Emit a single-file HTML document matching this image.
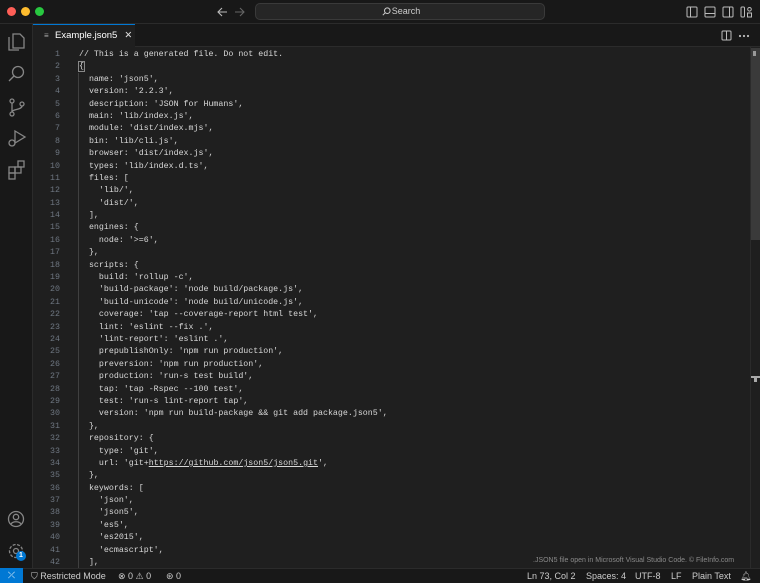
<!DOCTYPE html>
<html><head><meta charset="utf-8"><style>
*{margin:0;padding:0;box-sizing:border-box}
body{width:760px;height:583px;background:#1f1f1f;overflow:hidden;font-family:"Liberation Sans",sans-serif;position:relative;color:#ccc}
.title{position:absolute;left:0;top:0;width:760px;height:24px;background:#181818;border-bottom:1px solid #2b2b2b}
.dot{position:absolute;top:7px;width:9px;height:9px;border-radius:50%}
.search{position:absolute;left:255px;top:3px;width:290px;height:17px;background:#262626;border:1px solid #3a3a3a;border-radius:5px;font-size:9px;color:#ccc;text-align:center;line-height:15px}
.act{position:absolute;left:0;top:24px;width:33px;height:544px;background:#181818;border-right:1px solid #2b2b2b}
.tabs{position:absolute;left:33px;top:24px;width:727px;height:23px;background:#181818;border-bottom:1px solid #2b2b2b}
.tab{position:absolute;left:0;top:0;width:102px;height:23px;background:#1f1f1f;border-top:1px solid #0078d4;font-size:9.5px;color:#fff;line-height:22px;padding-left:22px}
.code{position:absolute;left:33px;top:48px;width:717px;height:521px;font-family:"Liberation Mono",monospace;font-size:8.3px;white-space:pre;line-height:12.39px;padding-top:1px}
.ln{position:absolute;left:0;color:#6e7681}
.tx{position:absolute;left:79px;color:#d8d8d8}
.guide{position:absolute;left:78px;top:73px;width:1px;height:495px;background:#404040}
.status{position:absolute;left:0;top:568px;width:760px;height:15px;background:#181818;border-top:1px solid #2b2b2b;font-size:9px;color:#ccc;line-height:14px}
.status span{position:absolute;top:0}
svg{position:absolute}
</style></head><body>
<div class="title">
<div class="dot" style="left:7px;background:#ff5f57"></div>
<div class="dot" style="left:21px;background:#febc2e"></div>
<div class="dot" style="left:35px;background:#28c840"></div>
<svg style="left:216px;top:6px" width="30" height="12" viewBox="0 0 30 12" fill="none" stroke="#bbb" stroke-width="1.1"><path d="M2 6h9M6 2L2 6l4 4"/><path d="M19 6h9M24 2l4 4-4 4" stroke="#666"/></svg>
<div class="search"><svg style="left:126px;top:3px" width="9" height="9" viewBox="0 0 9 9" fill="none" stroke="#ccc" stroke-width="1"><circle cx="5.3" cy="3.7" r="2.8"/><path d="M3.3 5.7L.8 8.2"/></svg><span style="margin-left:12px">Search</span></div>
<svg style="left:686px;top:6px" width="68" height="12" viewBox="0 0 68 12" fill="none" stroke="#bbb" stroke-width="1"><rect x="1" y="1" width="10" height="10" rx="1"/><path d="M4.5 1v10"/><rect x="19" y="1" width="10" height="10" rx="1"/><path d="M19 7.5h10"/><rect x="37" y="1" width="10" height="10" rx="1"/><path d="M43.5 1v10"/><rect x="55" y="1" width="3.5" height="10" rx="1"/><circle cx="63.5" cy="3.3" r="1.8"/><rect x="61.5" y="7" width="4" height="4"/></svg>
</div>
<div class="act">
<svg style="left:7px;top:7px" width="20" height="150" viewBox="0 0 20 150" fill="none" stroke="#868686" stroke-width="1.3">
<path d="M6 3h7l4 4v10H6z M2 6v13h10"/>
<circle cx="11" cy="41" r="5.5"/><path d="M7 45l-5 5"/>
<circle cx="5" cy="70" r="2"/><circle cx="5" cy="83" r="2"/><circle cx="15" cy="73" r="2"/><path d="M5 72v9M15 75c0 4-10 3-10 6"/>
<path d="M8 100l10 6-10 6z"/><circle cx="5" cy="112" r="3"/>
<rect x="2" y="136" width="6" height="6"/><rect x="8" y="136" width="6" height="6"/><rect x="2" y="142" width="6" height="6"/><rect x="11" y="130" width="6" height="6"/>
</svg>
<svg style="left:7px;top:485px" width="20" height="60" viewBox="0 0 20 60" fill="none" stroke="#868686" stroke-width="1.3"><circle cx="9" cy="10" r="7.5"/><circle cx="9" cy="8" r="2.7"/><path d="M4 15c2-3 8-3 10 0"/><circle cx="9" cy="42" r="6.5" stroke-dasharray="3 1.5"/><circle cx="9" cy="42" r="2.5"/></svg>
<div style="position:absolute;left:16px;top:527px;width:10px;height:10px;border-radius:50%;background:#0078d4;color:#fff;font-size:7px;text-align:center;line-height:10px;font-weight:bold">1</div>
</div>
<div class="tabs">
<div class="tab"><span style="position:absolute;left:11px;top:0;font-size:8px;color:#aaa">≡</span>Example.json5<span style="margin-left:7px;color:#ddd">✕</span></div>
<svg style="left:688px;top:6px" width="40" height="11" viewBox="0 0 40 11" fill="none" stroke="#bbb" stroke-width="1"><rect x="1" y="1" width="9" height="9" rx="1"/><path d="M5.5 1v9"/><circle cx="19" cy="6" r=".6" fill="#bbb"/><circle cx="23" cy="6" r=".6" fill="#bbb"/><circle cx="27" cy="6" r=".6" fill="#bbb"/></svg>
</div>
<div style="position:absolute;left:750px;top:47px;width:10px;height:521px;border-left:1px solid #2b2b2b"></div>
<div style="position:absolute;left:751px;top:48px;width:9px;height:192px;background:#3a3a3a"></div>
<div style="position:absolute;left:753px;top:51px;width:3px;height:5px;background:#999"></div>
<div style="position:absolute;left:751px;top:376px;width:9px;height:2px;background:#aaa"></div>
<div style="position:absolute;left:754px;top:377px;width:3px;height:5px;background:#aaa"></div>
<div class="guide"></div>
<div class="ln code" style="left:0;width:60px;text-align:right">1
2
3
4
5
6
7
8
9
10
11
12
13
14
15
16
17
18
19
20
21
22
23
24
25
26
27
28
29
30
31
32
33
34
35
36
37
38
39
40
41
42</div>
<div class="code tx" style="left:79px;width:660px">// This is a generated file. Do not edit.
<span style="outline:1px solid #888">{</span>
  name: 'json5',
  version: '2.2.3',
  description: 'JSON for Humans',
  main: 'lib/index.js',
  module: 'dist/index.mjs',
  bin: 'lib/cli.js',
  browser: 'dist/index.js',
  types: 'lib/index.d.ts',
  files: [
    'lib/',
    'dist/',
  ],
  engines: {
    node: '>=6',
  },
  scripts: {
    build: 'rollup -c',
    'build-package': 'node build/package.js',
    'build-unicode': 'node build/unicode.js',
    coverage: 'tap --coverage-report html test',
    lint: 'eslint --fix .',
    'lint-report': 'eslint .',
    prepublishOnly: 'npm run production',
    preversion: 'npm run production',
    production: 'run-s test build',
    tap: 'tap -Rspec --100 test',
    test: 'run-s lint-report tap',
    version: 'npm run build-package &amp;&amp; git add package.json5',
  },
  repository: {
    type: 'git',
    url: 'git+<u>https://github.com/json5/json5.git</u>',
  },
  keywords: [
    'json',
    'json5',
    'es5',
    'es2015',
    'ecmascript',
  ],</div>
<div style="position:absolute;left:533px;top:557px;font-size:7px;color:#8a8a8a">.JSON5 file open in Microsoft Visual Studio Code. © FileInfo.com</div>
<div class="status">
<div style="position:absolute;left:0;top:-1px;width:23px;height:15px;background:#0078d4;color:#fff;text-align:center;font-size:9px">⤫</div>
<span style="left:31px">⛉ Restricted Mode</span>
<span style="left:118px">⊗ 0 ⚠ 0</span>
<span style="left:166px">⊛ 0</span>
<span style="left:527px">Ln 73, Col 2</span>
<span style="left:586px">Spaces: 4</span>
<span style="left:635px">UTF-8</span>
<span style="left:671px">LF</span>
<span style="left:692px">Plain Text</span>
<span style="left:740px">🔔︎</span>
</div>
</body></html>
